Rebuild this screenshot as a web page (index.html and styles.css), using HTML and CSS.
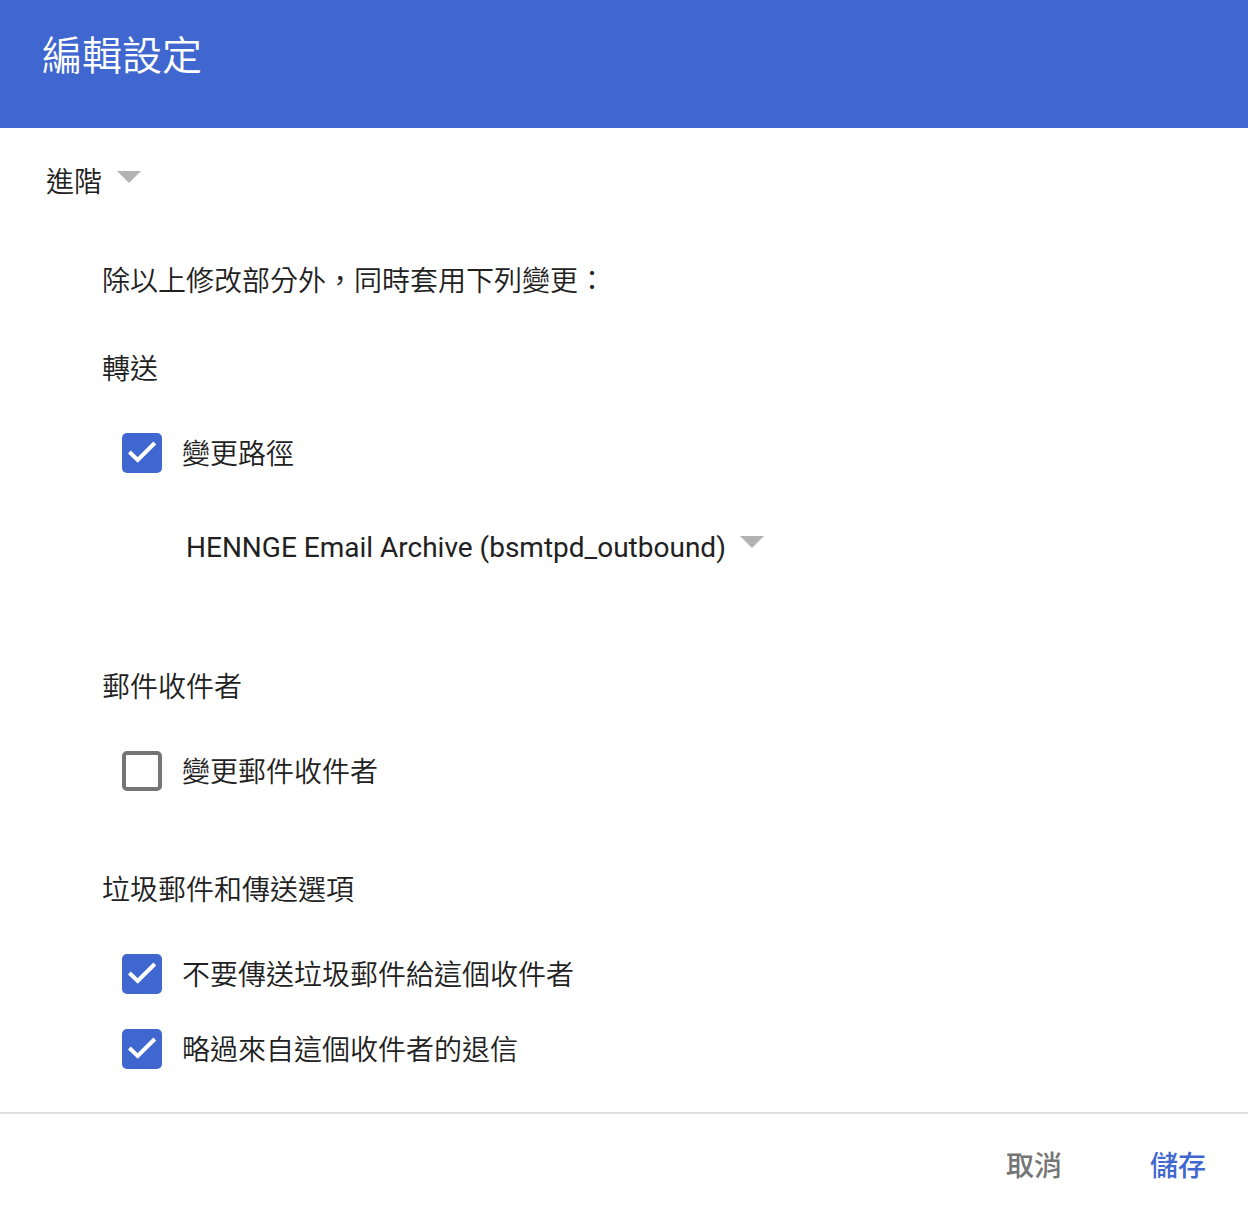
FILE: index.html
```html
<!DOCTYPE html>
<html lang="zh-Hant">
<head>
    <meta charset="UTF-8">
    <meta name="viewport" content="width=device-width, initial-scale=1.0">
    <title>編輯設定</title>
    <link rel="stylesheet" href="styles.css">
</head>
<body>
    <form class="dialog">
        <header class="dialog-header">
            <h1>編輯設定</h1>
        </header>

        <main class="dialog-body">
            <select class="dropdown" aria-label="設定模式">
                <option>進階</option>
            </select>

            <div class="settings">
                <p class="intro">除以上修改部分外，同時套用下列變更：</p>

                <section class="group">
                    <h2>轉送</h2>
                    <label class="option">
                        <input type="checkbox" checked>
                        <span>變更路徑</span>
                    </label>
                    <div class="route">
                        <select class="dropdown" aria-label="路徑">
                            <option>HENNGE Email Archive (bsmtpd_outbound)</option>
                        </select>
                    </div>
                </section>

                <section class="group">
                    <h2>郵件收件者</h2>
                    <label class="option">
                        <input type="checkbox">
                        <span>變更郵件收件者</span>
                    </label>
                </section>

                <section class="group">
                    <h2>垃圾郵件和傳送選項</h2>
                    <label class="option">
                        <input type="checkbox" checked>
                        <span>不要傳送垃圾郵件給這個收件者</span>
                    </label>
                    <label class="option">
                        <input type="checkbox" checked>
                        <span>略過來自這個收件者的退信</span>
                    </label>
                </section>
            </div>
        </main>

        <footer class="dialog-footer">
            <button type="button" class="btn">取消</button>
            <button type="submit" class="btn btn-primary">儲存</button>
        </footer>
    </form>
</body>
</html>
```
FILE: styles.css
```css
* {
    box-sizing: border-box;
}
body {
    margin: 0;
    background-color: #fff;
    color: #212121;
    font-family: Roboto, "Noto Sans CJK TC", sans-serif;
    font-size: 28px;
    font-weight: 350;
    line-height: 40px;
}
.dialog {
    display: flex;
    flex-direction: column;
    min-height: 100vh;
}
.dialog-header {
    background-color: #4067cf;
    color: #fff;
    padding: 29px 42px 43px;
}
h1 {
    margin: 0;
    font-size: 40px;
    font-weight: 350;
    line-height: 56px;
}
.dialog-body {
    flex: 1;
    padding: 35px 46px 22px;
}
.dropdown {
    appearance: none;
    border: none;
    margin: 0;
    padding: 0 38px 0 0;
    height: 40px;
    font: inherit;
    color: inherit;
    cursor: pointer;
    background: url("data:image/svg+xml,%3Csvg xmlns='http://www.w3.org/2000/svg' width='24' height='12'%3E%3Cpath d='M0 0h24L12 12z' fill='%23b3b3b3'/%3E%3C/svg%3E") no-repeat right 8px;
}
.settings {
    padding: 59px 56px 0;
}
.intro {
    margin: 0 0 48px;
}
.group {
    margin-bottom: 63px;
}
.group:last-child {
    margin-bottom: 0;
}
h2 {
    margin: 0 0 25px;
    font-size: 28px;
    font-weight: 350;
    line-height: 40px;
}
.option {
    display: flex;
    align-items: center;
    gap: 20px;
    min-height: 75px;
    padding-left: 20px;
}
.option span {
    padding-top: 4px;
}
.option input {
    appearance: none;
    flex: none;
    width: 40px;
    height: 40px;
    margin: 0;
    border: 4px solid #757575;
    border-radius: 5px;
    cursor: pointer;
}
.option input:checked {
    border: none;
    background: #4067cf url("data:image/svg+xml,%3Csvg xmlns='http://www.w3.org/2000/svg' width='40' height='40'%3E%3Cpath d='M7.4 19l8.3 8L32.8 10' fill='none' stroke='%23fff' stroke-width='4'/%3E%3C/svg%3E") no-repeat center;
}
.route {
    padding: 38px 0 37px 84px;
    font-weight: 400;
}
.dialog-footer {
    display: flex;
    justify-content: flex-end;
    gap: 88px;
    padding: 33px 42px 21px;
    border-top: 2px solid #e0e0e0;
}
.btn {
    border: none;
    background: none;
    padding: 0;
    font: inherit;
    font-weight: 500;
    color: #757575;
    cursor: pointer;
}
.btn-primary {
    color: #4067cf;
}
```
